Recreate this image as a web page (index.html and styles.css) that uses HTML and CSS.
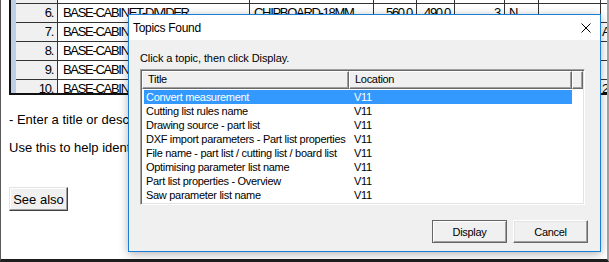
FILE: index.html
```html
<!DOCTYPE html>
<html lang="en">
<head>
    <meta charset="UTF-8">
    <meta name="viewport" content="width=device-width, initial-scale=1.0">
    <title>Topics Found</title>
    <link rel="stylesheet" href="styles.css">
</head>
<body>
    <div class="app">
        <div class="sheet">
            <div class="strip"></div>
            <div class="rows">
                <!-- row 5 is scrolled out of view, only its lower edge shows -->
                <div class="row">
                    <span class="n"></span><span></span><span></span><span></span><span></span><span></span><span></span><span></span><span></span>
                </div>
                <div class="row">
                    <span class="n">6.</span><span>BASE-CABINET-DIVIDER</span><span>CHIPBOARD-18MM</span><span class="r">560.0</span><span class="r">490.0</span><span class="r">3</span><span>N</span><span></span><span></span>
                </div>
                <div class="row">
                    <span class="n">7.</span><span>BASE-CABINET-DOOR</span><span>MDF-18MM</span><span class="r">720.0</span><span class="r">396.0</span><span class="r">2</span><span>Y</span><span></span><span>A</span>
                </div>
                <div class="row">
                    <span class="n">8.</span><span>BASE-CABINET-PLINTH</span><span>CHIPBOARD-16MM</span><span class="r">800.0</span><span class="r">100.0</span><span class="r">1</span><span>N</span><span></span><span></span>
                </div>
                <div class="row">
                    <span class="n">9.</span><span>BASE-CABINET-RAIL</span><span>CHIPBOARD-18MM</span><span class="r">764.0</span><span class="r">80.0</span><span class="r">2</span><span>N</span><span></span><span></span>
                </div>
                <div class="row">
                    <span class="n">10.</span><span>BASE-CABINET-SHELF</span><span>CHIPBOARD-18MM</span><span class="r">764.0</span><span class="r">470.0</span><span class="r">2</span><span>N</span><span></span><span>22</span>
                </div>
            </div>
        </div>

        <p class="note first">- Enter a title or description for the part list.</p>
        <p class="note">Use this to help identify the part list later.</p>
        <button class="see-also">See also</button>

        <!-- dialog window over the help page -->
        <div class="dialog">
            <div class="titlebar">
                <span>Topics Found</span>
                <svg class="close" width="10" height="10" viewBox="0 0 10 10">
                    <path d="M0.5 0.5 L9.5 9.5 M9.5 0.5 L0.5 9.5" stroke="#000" stroke-width="1" fill="none"/>
                </svg>
            </div>
            <div class="dialog-body">
                <div class="prompt">Click a topic, then click Display.</div>
                <div class="list">
                    <div class="list-head">
                        <span class="col-title">Title</span><span class="col-loc">Location</span><span class="col-fill"></span>
                    </div>
                    <div class="list-body">
                        <div class="list-row selected"><span>Convert measurement</span><span>V11</span></div>
                        <div class="list-row"><span>Cutting list rules name</span><span>V11</span></div>
                        <div class="list-row"><span>Drawing source - part list</span><span>V11</span></div>
                        <div class="list-row"><span>DXF import parameters - Part list properties</span><span>V11</span></div>
                        <div class="list-row"><span>File name - part list / cutting list / board list</span><span>V11</span></div>
                        <div class="list-row"><span>Optimising parameter list name</span><span>V11</span></div>
                        <div class="list-row"><span>Part list properties - Overview</span><span>V11</span></div>
                        <div class="list-row"><span>Saw parameter list name</span><span>V11</span></div>
                    </div>
                </div>
                <div class="dialog-buttons">
                    <button class="btn default">Display</button>
                    <button class="btn">Cancel</button>
                </div>
            </div>
        </div>
    </div>
</body>
</html>
```

FILE: styles.css
```css
* {
    box-sizing: border-box;
}
body {
    margin: 0;
    width: 609px;
    height: 262px;
    overflow: hidden;
    background-color: #fff;
    font-family: "Liberation Sans", Arial, sans-serif;
    color: #000;
}
.app {
    position: relative;
    height: 262px;
    border-left: 1px solid #5a5a5a;
    border-right: 2px solid #a3a3a3;
    border-bottom: 3px solid #1e1e1e;
    background-color: #fff;
}

/* part list grid behind the dialog */
.sheet {
    display: flex;
    margin-left: 8px;
    height: 95px;
    border-left: 2px solid #111;
    border-bottom: 2px solid #111;
    overflow: hidden;
}
.strip {
    width: 5px;
    background-color: #bccfe4;
}
.rows {
    flex: 1;
    margin-top: -16px;
}
.row {
    display: grid;
    grid-template-columns: 42px 192px 124px 43px 38px 50px 34px 62px 1fr;
    height: 19px;
}
.row span {
    border-top: 1px solid #333;
    border-right: 1px solid #333;
    padding: 2px 4px 0 4px;
    font-size: 13px;
    line-height: 14px;
    letter-spacing: -1.3px;
    white-space: nowrap;
    overflow: hidden;
}
.row span:nth-child(2) {
    padding-left: 5px;
}
.row span:last-child {
    border-right: none;
    padding-left: 1px;
}
.row .n {
    background-color: #f0f0f0;
    text-align: right;
}
.row .r {
    text-align: right;
}

.note {
    margin: 13px 0 0 8px;
    font-size: 13px;
    line-height: 15px;
    white-space: nowrap;
}
.note.first {
    margin-top: 17px;
}
.see-also {
    display: block;
    margin: 32px 0 0 8px;
    width: 59px;
    height: 24px;
    padding: 0;
    font-family: inherit;
    font-size: 13px;
    color: #000;
    background-color: #f0f0f0;
    border: 1px solid;
    border-color: #e3e3e3 #404040 #404040 #e3e3e3;
    box-shadow: inset -1px -1px #a0a0a0, inset 1px 1px #fff;
}

/* Topics Found dialog */
.dialog {
    position: absolute;
    left: 127px;
    top: 14px;
    width: 473px;
    height: 238px;
    display: flex;
    flex-direction: column;
    border: 1px solid #1a7fd4;
    background-color: #f0f0f0;
    box-shadow: 0 2px 9px rgba(0, 0, 0, 0.3);
}
.titlebar {
    display: flex;
    align-items: center;
    justify-content: space-between;
    height: 25px;
    padding: 0 9px 0 4px;
    background-color: #fff;
    font-size: 12px;
    letter-spacing: -0.3px;
}
.close {
    display: block;
}
.dialog-body {
    flex: 1;
    padding: 12px 12px 0 11px;
    font-size: 11px;
}
.prompt {
    line-height: 13px;
    letter-spacing: -0.1px;
}
.list {
    margin: 4px 3px 0 0;
    height: 136px;
    padding: 1px;
    background-color: #fff;
    border: 1px solid;
    border-color: #a0a0a0 #fff #fff #a0a0a0;
    box-shadow: inset 1px 1px #696969, inset -1px -1px #e3e3e3;
}
.list-head {
    display: flex;
    height: 18px;
}
.list-head span {
    border: 1px solid;
    border-color: #fff #696969 #696969 #fff;
    box-shadow: inset -1px -1px #a0a0a0;
    background-color: #f0f0f0;
    padding-left: 5px;
    line-height: 15px;
    letter-spacing: -0.3px;
}
.col-title {
    width: 207px;
}
.col-loc {
    width: 223px;
}
.col-fill {
    flex: 1;
}
.list-body {
    padding-top: 1px;
}
.list-row {
    display: flex;
    width: 428px;
    height: 14px;
    margin-left: 2px;
    line-height: 14px;
    letter-spacing: -0.3px;
    white-space: nowrap;
}
.list-row span:first-child {
    width: 205px;
    padding-left: 2px;
}
.list-row span:last-child {
    padding-left: 5px;
}
.list-row.selected {
    background-color: #3399ff;
    color: #fff;
}
.dialog-buttons {
    display: flex;
    justify-content: flex-end;
    gap: 6px;
    margin-top: 15px;
}
.btn {
    width: 75px;
    height: 23px;
    padding: 0;
    font-family: inherit;
    font-size: 11px;
    letter-spacing: -0.3px;
    color: #000;
    background-color: #f0f0f0;
    border: 1px solid;
    border-color: #fff #696969 #696969 #fff;
    box-shadow: inset -1px -1px #a0a0a0, inset 1px 1px #e3e3e3;
}
.btn.default {
    border-color: #646464;
    box-shadow: inset 1px 1px #fff, inset -1px -1px #a0a0a0;
}
```
